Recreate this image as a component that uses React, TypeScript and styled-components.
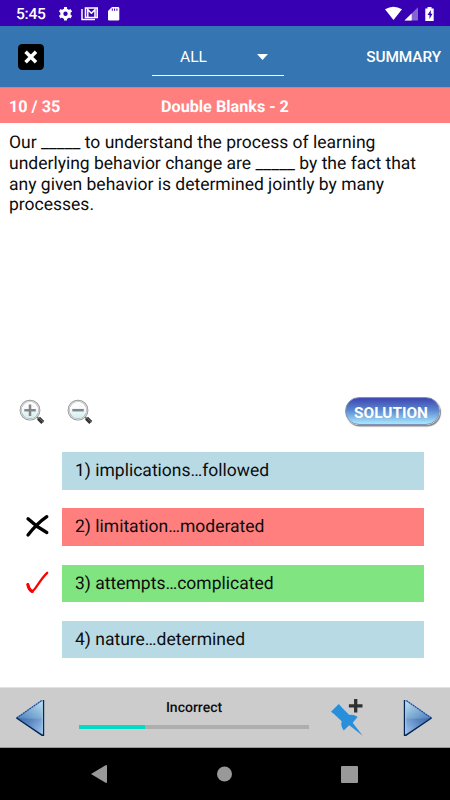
import React from "react";
import styled, { createGlobalStyle } from "styled-components";

const GlobalStyle = createGlobalStyle`
  * { box-sizing: border-box; }
  body { margin: 0; background: #fff; font-family: Roboto, sans-serif; text-rendering: geometricPrecision; }
  svg { display: block; flex: none; }
`;

const Screen = styled.div`
  width: 450px;
  height: 800px;
  display: flex;
  flex-direction: column;
  overflow: hidden;
  background: #fff;
  color: #0c0c0c;
`;

const StatusBar = styled.header`
  height: 26px;
  flex: none;
  display: flex;
  align-items: center;
  padding: 1px 16px 0 16px;
  background: #3700b3;
  color: #fff;
`;

const Clock = styled.span`
  width: 42px;
  font-size: 15.6px;
  font-weight: 500;
  line-height: 20px;
  letter-spacing: -0.25px;
`;

const StatusIcons = styled.div<{ $end?: boolean }>`
  display: flex;
  margin-left: ${(p) => (p.$end ? "auto" : "0")};
`;

const Toolbar = styled.nav`
  height: 61px;
  flex: none;
  display: flex;
  align-items: center;
  padding: 0 9px 0 18px;
  background: #3575b1;
  color: #fff;
`;

const IconButton = styled.button`
  display: block;
  padding: 0;
  border: 0;
  background: none;
  color: inherit;
`;

const Spinner = styled.div`
  width: 132px;
  height: 38px;
  margin: 0 auto 0 108px;
  padding: 1px 16px 0 28px;
  display: flex;
  align-items: center;
  justify-content: space-between;
  border-bottom: 1.5px solid #fff;
  font-size: 15.6px;
`;

const SummaryButton = styled(IconButton)`
  padding-top: 1px;
  font: 500 15.4px/20px Roboto, sans-serif;
  letter-spacing: -0.1px;
`;

const QuestionBar = styled.div`
  height: 36px;
  flex: none;
  display: grid;
  grid-template-columns: 152px 1fr;
  align-items: center;
  padding: 2px 9px 0;
  background: #ff7f7f;
  border-top: 1px solid #dc7b87;
  color: #fff;
  font-size: 16.2px;
  font-weight: 700;
`;

const Question = styled.p`
  height: 275px;
  flex: none;
  margin: 0;
  padding: 10px 24px 0 9px;
  font-size: 17.5px;
  line-height: 20.8px;
`;

const Tools = styled.div`
  height: 54px;
  flex: none;
  display: flex;
  align-items: flex-start;
  gap: 21px;
  padding: 0 10px 0 19px;
`;

const Solution = styled.button`
  width: 95px;
  height: 28px;
  margin: -1px 0 0 auto;
  padding: 3px 3px 0 0;
  border: 1px solid #8291b8;
  border-radius: 14px;
  background: linear-gradient(#414cb5 5%, #5885ce 45%, #a3e2fb 96%);
  box-shadow: 1px 1.5px 1px #858585;
  color: #fff;
  font: 700 15.4px/20px Roboto, sans-serif;
`;

const Answers = styled.ol`
  height: 235px;
  flex: none;
  display: flex;
  flex-direction: column;
  gap: 18.8px;
  margin: 0;
  padding: 0 26px 0 24px;
  list-style: none;
`;

const AnswerRow = styled.li`
  display: grid;
  grid-template-columns: 38px 1fr;
  grid-template-rows: 100%;
  align-items: center;
  height: 37.5px;
`;

const tones = { plain: "#b8dae5", wrong: "#ff7f7f", right: "#80e480" };
type Tone = keyof typeof tones;

const Answer = styled.div<{ $tone: Tone }>`
  grid-column: 2;
  height: 100%;
  padding: 2px 0 0 13px;
  background: ${(p) => tones[p.$tone]};
  font-size: 17.5px;
  line-height: 35.5px;
`;

const Footer = styled.footer`
  height: 61px;
  flex: none;
  display: flex;
  align-items: center;
  padding: 0 17px 0 15px;
  background: #ccc;
  border-top: 1px solid #e1e1e1;
  border-bottom: 1px solid #999;
`;

const Progress = styled.div`
  width: 230px;
  margin: 0 21px 0 34px;
  padding-bottom: 8px;
  display: flex;
  flex-direction: column;
  align-items: center;
  gap: 8px;
  font-size: 14px;
  font-weight: 500;
  line-height: 18px;
`;

const Track = styled.div`
  width: 100%;
  height: 4px;
  background: #aeaeae;
`;

const Fill = styled.div`
  height: 100%;
  background: #03dac5;
`;

const NextButton = styled(IconButton)`
  margin-left: auto;
`;

const SystemNav = styled.nav`
  flex: 1;
  display: flex;
  align-items: center;
  justify-content: space-between;
  padding: 0 92px 0 91px;
  background: #000;
`;

function Magnifier({ plus }: { plus?: boolean }) {
  return (
    <svg width="27" height="28" viewBox="0 0 27 28">
      <defs>
        <linearGradient id="lens" x2="0" y2="1">
          <stop offset=".35" stopColor="#fafdfd" />
          <stop offset="1" stopColor="#c9edf2" />
        </linearGradient>
      </defs>
      <path d="m18 19 3 2.7" stroke="#777" strokeWidth="2" />
      <path d="m19.5 20.3 4.3 4.2" stroke="#333" strokeWidth="4.2" />
      <path d="m20.3 20.2 4 3.8" stroke="#777" strokeWidth="1" />
      <circle cx="11" cy="12.2" r="9.4" fill="url(#lens)" stroke="#8e8e8e" strokeWidth="2" />
      <circle cx="11" cy="12.2" r="9.1" fill="none" stroke="#d8d8d8" strokeWidth="1.2" />
      <path d={plus ? "M5.3 12.2h11.5M11 6.5v11.5" : "M5.3 12.2h11.5"} stroke="#858585" strokeWidth="2.5" />
    </svg>
  );
}

function GlassArrow({ next }: { next?: boolean }) {
  const id = next ? "next" : "prev";
  return (
    <svg width="30" height="40" viewBox="0 0 30 40">
      <defs>
        <linearGradient id={`${id}-top`} x1="1" x2="0" y2="1">
          <stop stopColor="#c4e5f4" />
          <stop offset="1" stopColor="#497fba" />
        </linearGradient>
        <linearGradient id={`${id}-base`} x2="1" y2="1">
          <stop stopColor="#264f91" />
          <stop offset=".55" stopColor="#5885bf" />
          <stop offset="1" stopColor="#a4c9f4" />
        </linearGradient>
      </defs>
      <g transform={next ? "translate(30 0) scale(-1 1)" : undefined}>
        <path d="M1.5 20 28.3 2v35Z" fill={`url(#${id}-base)`} />
        <path d="M1.5 20 28.3 2v18.5Q15 21 1.5 20Z" fill={`url(#${id}-top)`} />
        <path d="M1.5 20 27 2.3" fill="none" stroke="#1747a0" strokeWidth="1.2" strokeDasharray="2 .6" />
        <path d="M1.5 20 27 37.2H28.5V2" fill="none" stroke="#062655" strokeWidth="1.4" />
        <path d="M27.3 3.8v31.8" stroke="#a8daf0" strokeWidth=".8" />
      </g>
    </svg>
  );
}

function PinAdd() {
  return (
    <svg width="34" height="40" viewBox="0 0 34 40">
      <path d="M1 13.8 8.8 6l3.3 3.7 7.2 7.2c2.8-.5 5.8.2 8.3 2.2l-4.9 5.6L32.7 37.8 19.2 27.3l-5.4 5.2c-2.2-2.8-3.2-5.7-2.1-9.2L4 16.1Z" fill="#298fdb" />
      <path d="M25.7 1v13.6M18.9 7.8h13.6" stroke="#303030" strokeWidth="3.3" />
    </svg>
  );
}

const answers: { text: string; tone: Tone }[] = [
  { text: "1) implications…followed", tone: "plain" },
  { text: "2) limitation…moderated", tone: "wrong" },
  { text: "3) attempts…complicated", tone: "right" },
  { text: "4) nature…determined", tone: "plain" },
];

function Mark({ tone }: { tone: Tone }) {
  if (tone === "wrong")
    return (
      <svg width="26" height="26" viewBox="0 0 26 26">
        <path d="M4 4.8Q12.5 13 22.8 18.5M22.8 2.7Q13 9.5 4 21" fill="none" stroke="#000" strokeWidth="3.3" strokeLinecap="round" />
      </svg>
    );
  if (tone === "right")
    return (
      <svg width="26" height="26" viewBox="0 0 26 26">
        <path d="M3.8 14.3Q5.3 20.8 8.2 21.2C11.5 20.5 15 10.5 23.2 2.8" fill="none" stroke="#f00" strokeWidth="2.3" strokeLinecap="round" />
        <path d="M3.8 14.5Q5 20 8.2 21.5" fill="none" stroke="#f00" strokeWidth="3.1" strokeLinecap="round" />
      </svg>
    );
  return null;
}

export default function App() {
  const answered = 10;
  const total = 35;
  return (
    <>
      <GlobalStyle />
      <Screen>
        <StatusBar>
          <Clock>5:45</Clock>
          <StatusIcons>
            <svg width="62" height="16" viewBox="0 0 62 16">
              <g fill="none" stroke="#fff">
                <circle cx="7.5" cy="7.7" r="3.7" strokeWidth="3" />
                <path d="M7.5 1v2.5m0 8.5v2.5M1.7 4.3l2.1 1.3m7.4 4.2 2.1 1.3m-11.6 0 2.1-1.3m7.4-4.2 2.1-1.3" strokeWidth="3" />
                <path d="M24 3v10.5h13" strokeWidth="1.5" />
                <path d="M27.5 2h11.7v9.5H27.5Z" strokeWidth="1.6" />
                <path d="M29.8 11V3.6l3.6 3.6L37 3.6V11" strokeWidth="1.5" />
              </g>
              <path d="M54 1h6q1.3 0 1.3 1.3v10.9q0 1.3-1.3 1.3h-8.7q-1.3 0-1.3-1.3V5Z" fill="#fff" />
              <path d="M54.3 2.5v2.3M56.6 2.5v2.3M58.9 2.5v2.3" stroke="#3700b3" />
            </svg>
          </StatusIcons>
          <StatusIcons $end>
            <svg width="50" height="16" viewBox="0 0 50 16">
              <path d="M1 3.2Q9.5-1.8 18 3.2L9.5 14Z" fill="#fff" />
              <path d="M20.5 14.5 34 1.3v13.2Z" fill="#8665d1" />
              <path d="m20.5 14.5 7.2-7v7Z" fill="#fff" />
              <path d="M43.5 1h4v1.5h2.2v12.4h-8.4V2.5h2.2Z" fill="#fff" />
              <path d="m46.8 4-3.3 5h2v4l3-5.2h-1.7Z" fill="#3700b3" />
            </svg>
          </StatusIcons>
        </StatusBar>
        <Toolbar>
          <IconButton aria-label="Close">
            <svg width="26" height="26" viewBox="0 0 26 26">
              <rect width="26" height="26" rx="4.2" fill="#000" />
              <path d="m8.8 9 8 8m0-8-8 8" stroke="#fff" strokeWidth="3.5" strokeLinecap="square" />
            </svg>
          </IconButton>
          <Spinner>
            ALL
            <svg width="11" height="6" viewBox="0 0 11 6"><path d="M0 0h11L5.5 6Z" fill="#fff" /></svg>
          </Spinner>
          <SummaryButton>SUMMARY</SummaryButton>
        </Toolbar>
        <QuestionBar><span>{answered} / {total}</span><span>Double Blanks - 2</span></QuestionBar>
        <Question>
          Our _____ to understand the process of learning underlying behavior change are _____ by the fact that any given behavior is determined jointly by many processes.
        </Question>
        <Tools>
          <IconButton aria-label="Zoom in"><Magnifier plus /></IconButton>
          <IconButton aria-label="Zoom out"><Magnifier /></IconButton>
          <Solution>SOLUTION</Solution>
        </Tools>
        <Answers>
          {answers.map((a) => (
            <AnswerRow key={a.text}><Mark tone={a.tone} /><Answer $tone={a.tone}>{a.text}</Answer></AnswerRow>
          ))}
        </Answers>
        <Footer>
          <IconButton aria-label="Previous"><GlassArrow /></IconButton>
          <Progress>
            <span>Incorrect</span>
            <Track><Fill style={{ width: `${(answered / total) * 100}%` }} /></Track>
          </Progress>
          <IconButton aria-label="Pin question"><PinAdd /></IconButton>
          <NextButton aria-label="Next"><GlassArrow next /></NextButton>
        </Footer>
        <SystemNav>
          <svg width="16" height="18" viewBox="0 0 16 18"><path d="M0 9 15 0q1 0 1 1v16q0 1-1 1Z" fill="#999" /></svg>
          <svg width="16" height="16" viewBox="0 0 16 16"><circle cx="8.5" cy="8" r="7.5" fill="#999" /></svg>
          <svg width="17" height="17" viewBox="0 0 17 17"><rect width="17" height="17" rx="1" fill="#999" /></svg>
        </SystemNav>
      </Screen>
    </>
  );
}
